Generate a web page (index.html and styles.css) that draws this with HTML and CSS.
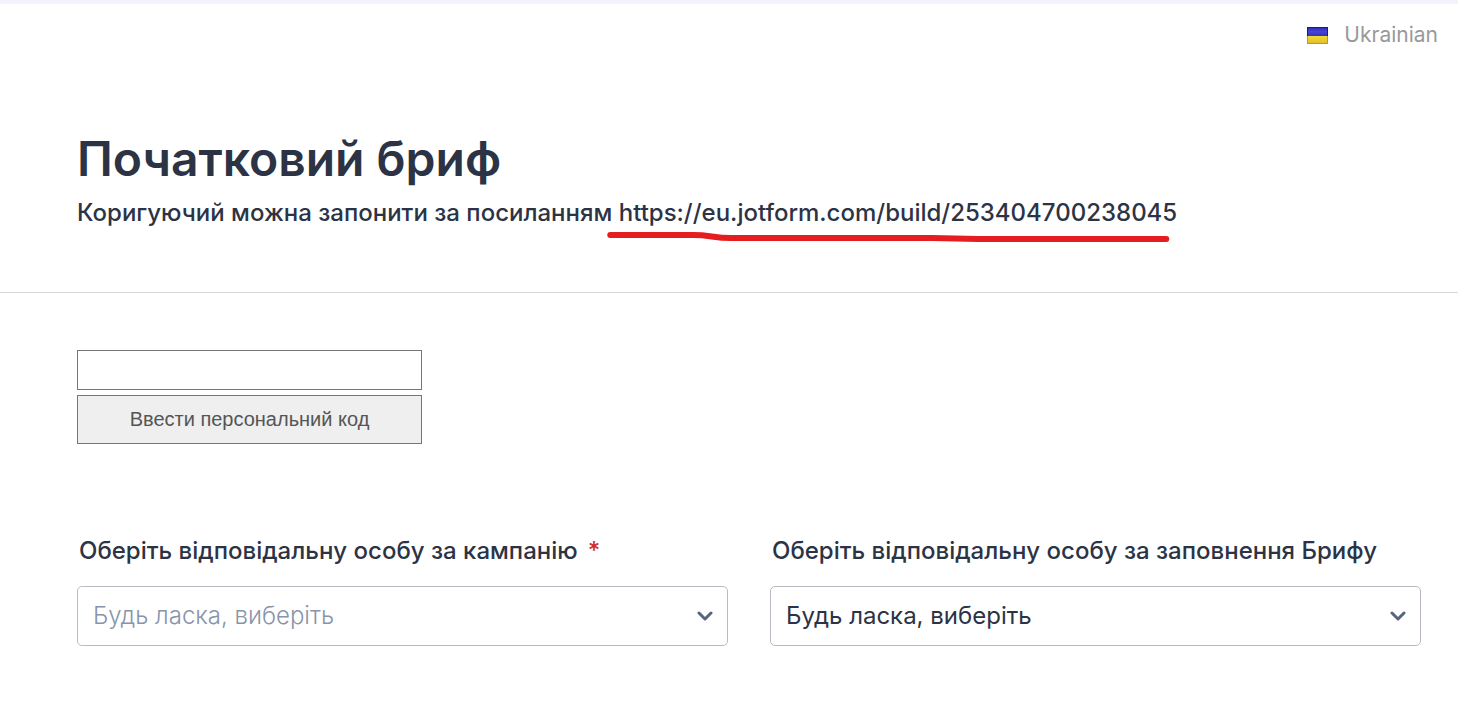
FILE: index.html
```html
<!DOCTYPE html>
<html lang="uk">
<head>
<meta charset="utf-8">
<meta name="viewport" content="width=device-width, initial-scale=1">
<title>Початковий бриф</title>
<link rel="stylesheet" href="styles.css">
</head>
<body>
<form class="form">
  <div class="topbar">
    <button type="button" class="language">
      <svg class="flag" viewBox="0 0 21 17" aria-hidden="true">
        <defs>
          <linearGradient id="blue" x1="0" y1="0" x2="0" y2="1"><stop offset="0" stop-color="#2b27b8"/><stop offset=".5" stop-color="#4644d2"/><stop offset="1" stop-color="#3431bd"/></linearGradient>
          <linearGradient id="yellow" x1="0" y1="0" x2="0" y2="1"><stop offset="0" stop-color="#f5d936"/><stop offset="1" stop-color="#dfbb25"/></linearGradient>
        </defs>
        <rect width="21" height="9" fill="url(#blue)"/>
        <rect y="9" width="21" height="8" fill="url(#yellow)"/>
        <path d="M.5 9V.5h20V9" fill="none" stroke="#1a1690"/>
        <path d="M.5 9v7.500h20V9" fill="none" stroke="#b39a2c"/>
      </svg>
      <span>Ukrainian</span>
    </button>
  </div>
  <header class="header">
    <h1 class="title">Початковий бриф</h1>
    <p class="subtitle">Коригуючий можна запонити за посиланням <span class="marked">https://eu.jotform.com/build/253404700238045<svg class="stroke" viewBox="0 0 562 12" aria-hidden="true"><path d="M3 4H86C103 4 106 7 124 7H325L371 8H559"/></svg></span></p>
  </header>
  <main class="fields">
    <div class="code">
      <input class="code-input" type="text" aria-label="Персональний код">
      <button class="code-button" type="button">Ввести персональний код</button>
    </div>
    <div class="columns">
      <div class="field">
        <label class="label" for="campaign">Оберіть відповідальну особу за кампанію<span class="required">*</span></label>
        <div class="select-box">
          <select class="select muted" id="campaign" required><option value="">Будь ласка, виберіть</option></select>
          <svg class="chevron" viewBox="0 0 16 10" aria-hidden="true"><path d="M2 2l6 6 6-6"/></svg>
        </div>
      </div>
      <div class="field">
        <label class="label" for="brief">Оберіть відповідальну особу за заповнення Брифу</label>
        <div class="select-box">
          <select class="select" id="brief"><option value="">Будь ласка, виберіть</option></select>
          <svg class="chevron" viewBox="0 0 16 10" aria-hidden="true"><path d="M2 2l6 6 6-6"/></svg>
        </div>
      </div>
    </div>
  </main>
</form>
</body>
</html>
```
FILE: styles.css
```css
* { box-sizing: border-box; }
body {
  margin: 0;
  background: #fff;
  color: #2c3345;
  font-family: Inter, "Liberation Sans", sans-serif;
}
.form { border-top: 4px solid #f3f3fe; }
.topbar {
  display: flex;
  justify-content: flex-end;
  padding: 15px 20px 0;
}
.language {
  display: flex;
  align-items: center;
  gap: 16px;
  height: 32px;
  padding: 0;
  border: 0;
  background: none;
  color: #999;
  font: 400 21px/32px Inter, sans-serif;
}
.flag { width: 21px; height: 17px; }
.header {
  padding: 76px 77px 64px;
  border-bottom: 1px solid #d7d8dc;
}
.title {
  margin: 0;
  font-size: 48px;
  font-weight: 600;
  line-height: 64px;
}
.subtitle {
  margin: 7px 0 0;
  font-size: 24px;
  font-weight: 500;
  line-height: 30px;
}
.marked { position: relative; white-space: nowrap; }
.stroke {
  position: absolute;
  left: -12px;
  top: 33px;
  width: calc(100% + 4px);
  overflow: visible;
}
.stroke path {
  fill: none;
  stroke: #e51c20;
  stroke-width: 6;
  stroke-linecap: round;
  stroke-linejoin: round;
}
.fields { padding: 57px 37px 60px 77px; }
.code {
  display: flex;
  flex-direction: column;
  gap: 5px;
  max-width: 345px;
}
.code-input {
  height: 40px;
  padding: 0 12px;
  border: 1px solid #767676;
  font: 20px Inter, sans-serif;
}
.code-button {
  height: 49px;
  border: 1px solid #767676;
  background: #efefef;
  color: #555;
  font: 20px "Liberation Sans", Arial, sans-serif;
}
.columns {
  display: grid;
  grid-template-columns: 1fr 1fr;
  gap: 42px;
  margin-top: 91px;
}
.label {
  display: block;
  margin-bottom: 19px;
  padding-left: 2px;
  font-size: 24px;
  font-weight: 500;
  line-height: 32px;
  white-space: nowrap;
}
.required { margin-left: 10px; color: #cf2e2e; }
.select-box { display: grid; align-items: center; }
.select, .chevron { grid-area: 1 / 1; }
.select {
  appearance: none;
  width: 100%;
  height: 60px;
  padding: 0 48px 2px 15px;
  border: 1px solid #b9bbc2;
  border-radius: 5px;
  background: #fff;
  color: #2c3345;
  font: 400 24px Inter, sans-serif;
}
.select.muted { color: #8894ab; font-weight: 300; }
.chevron {
  justify-self: end;
  width: 16px;
  height: 10px;
  margin: 0 15px 0 0;
  pointer-events: none;
  fill: none;
  stroke: #57647e;
  stroke-width: 3;
  stroke-linecap: round;
  stroke-linejoin: round;
}
```
